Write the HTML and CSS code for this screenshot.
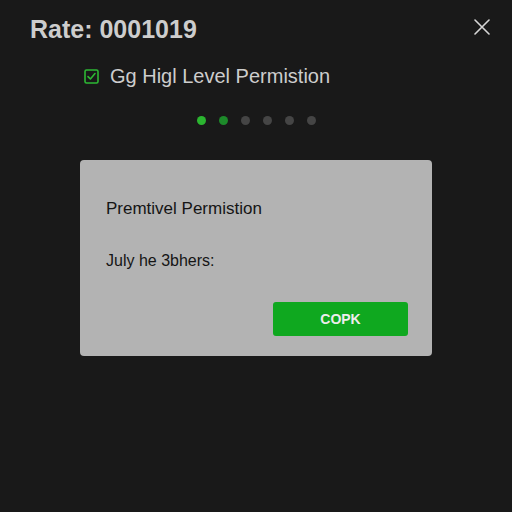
FILE: index.html
```html
<!DOCTYPE html>
<html lang="en">
<head>
<meta charset="utf-8">
<title>Rate</title>
<link rel="stylesheet" href="styles.css">
</head>
<body>
<div class="screen">
  <header class="top">
    <h1 class="rate">Rate: 0001019</h1>
    <button class="close" aria-label="Close">
      <svg width="16" height="16" viewBox="0 0 16 16"><path d="M1 1L15 15M15 1L1 15" stroke="#d6d6d6" stroke-width="1.6" stroke-linecap="round" fill="none"/></svg>
    </button>
  </header>

  <label class="perm">
    <span class="box">
      <svg width="15" height="15" viewBox="0 0 15 15"><rect x="1" y="1" width="13" height="13" rx="1.5" fill="none" stroke="#2db834" stroke-width="1.6"/><path d="M4 7.6L6.4 10L11 4.6" fill="none" stroke="#2db834" stroke-width="1.6" stroke-linejoin="round" stroke-linecap="round"/></svg>
    </span>
    <span class="perm-text">Gg Higl Level Permistion</span>
  </label>

  <div class="dots">
    <span class="dot on"></span>
    <span class="dot half"></span>
    <span class="dot"></span>
    <span class="dot"></span>
    <span class="dot"></span>
    <span class="dot"></span>
  </div>

  <section class="dialog">
    <h2 class="dialog-title">Premtivel Permistion</h2>
    <p class="dialog-body">July he 3bhers:</p>
    <div class="actions">
      <button class="ok">COPK</button>
    </div>
  </section>
</div>
</body>
</html>
```

FILE: styles.css
```css
html, body {
  margin: 0;
  padding: 0;
  background: #191919;
}

body {
  width: 512px;
  height: 512px;
  overflow: hidden;
  font-family: "Liberation Sans", Arial, sans-serif;
}

.screen {
  display: flex;
  flex-direction: column;
}

.top {
  display: flex;
  justify-content: space-between;
  align-items: flex-start;
  padding: 15px 22px 0 30px;
}

.rate {
  margin: 0;
  font-size: 25px;
  line-height: 29px;
  font-weight: bold;
  color: #cdcdcd;
}

.close {
  margin-top: 4px;
  padding: 0;
  border: 0;
  background: none;
  width: 16px;
  height: 16px;
  display: block;
}

.close svg { display: block; }

.perm {
  display: flex;
  align-items: center;
  gap: 11px;
  margin: 20px 0 0 84px;
  height: 24px;
}

.box {
  width: 15px;
  height: 15px;
  display: block;
}

.box svg { display: block; }

.perm-text {
  font-size: 20px;
  line-height: 24px;
  color: #cdcdcd;
}

.dots {
  display: flex;
  justify-content: center;
  gap: 13px;
  margin-top: 28px;
  height: 9px;
}

.dot {
  width: 9px;
  height: 9px;
  border-radius: 50%;
  background: #454545;
}

.dot.on { background: #2bb530; }
.dot.half { background: #1d8a2a; }

.dialog {
  align-self: center;
  width: 352px;
  height: 196px;
  box-sizing: border-box;
  margin-top: 35px;
  padding: 39px 24px 20px 26px;
  background: #b3b3b3;
  border-radius: 4px;
  color: #151515;
  display: flex;
  flex-direction: column;
}

.dialog-title {
  margin: 0;
  font-size: 17px;
  line-height: 20px;
  font-weight: normal;
}

.dialog-body {
  margin: 32px 0 0 0;
  font-size: 16px;
  line-height: 20px;
}

.actions {
  margin-top: auto;
  display: flex;
  justify-content: flex-end;
}

.ok {
  width: 135px;
  height: 34px;
  border: 0;
  border-radius: 3px;
  background: #0fa81f;
  color: #ededed;
  font-family: "Liberation Sans", Arial, sans-serif;
  font-size: 14px;
  font-weight: bold;
  padding: 0;
}
```
